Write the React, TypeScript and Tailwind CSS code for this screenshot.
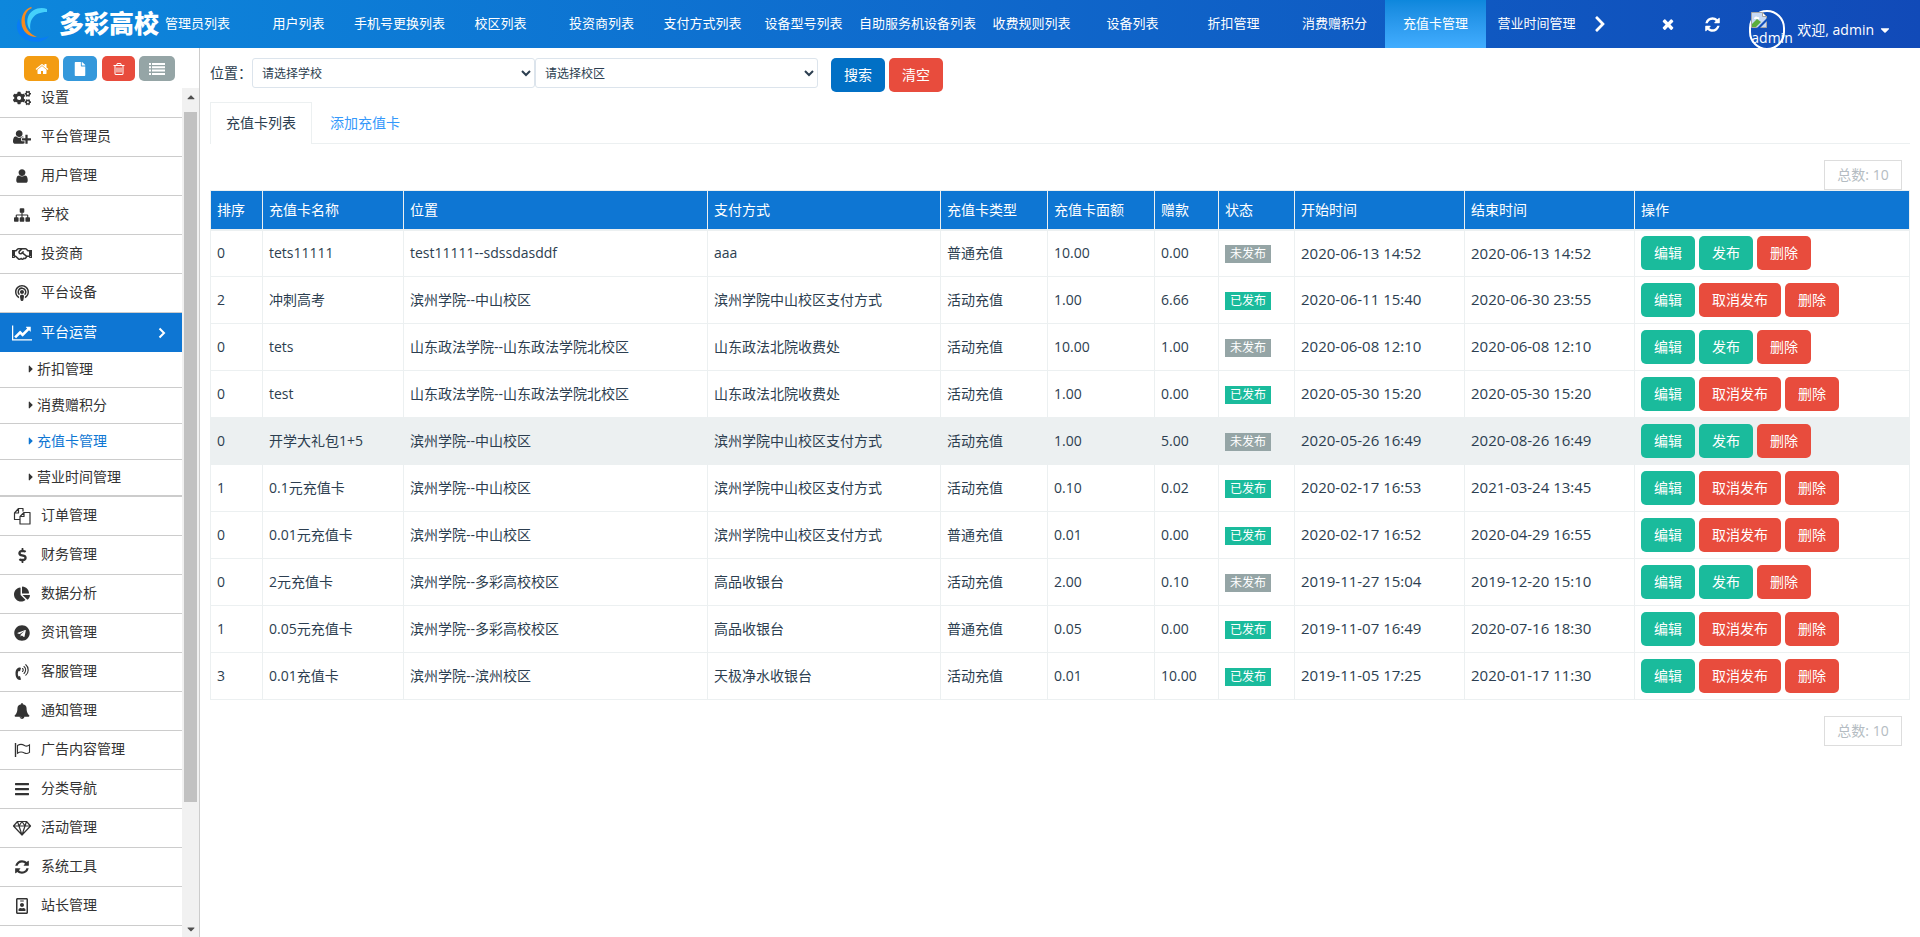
import { ReactNode, useState } from "react"
import clsx from "clsx"
import {
    FaBars,
    FaCaretDown,
    FaCaretRight,
    FaCaretUp,
    FaChartPie,
    FaChevronRight,
    FaCogs,
    FaDollarSign,
    FaFile,
    FaPodcast,
    FaRegHandshake,
    FaRegIdBadge,
    FaTelegram,
} from "react-icons/fa"

interface GlyphProps {
    d: string
    viewBox?: string
    className?: string
}

const Glyph = ({ d, viewBox = "0 0 1792 1792", className }: GlyphProps) => (
    <svg viewBox={viewBox} fill="currentColor" className={className} aria-hidden="true">
        <path d={d} />
    </svg>
)

const HOME = "M1472 992v480q0 26-19 45t-45 19h-384v-384h-256v384h-384q-26 0-45-19t-19-45v-480q0-1 .5-3t.5-3l575-474 575 474q1 2 1 6zm223-69l-62 74q-8 9-21 11h-3q-13 0-21-7l-692-577-692 577q-12 8-24 7-13-2-21-11l-62-74q-8-10-7-23.5t11-21.5l719-599q32-26 76-26t76 26l244 204v-195q0-14 9-23t23-9h192q14 0 23 9t9 23v408l219 182q10 8 11 21.5t-7 23.5z"
const TRASH = "M704 736v576q0 14-9 23t-23 9h-64q-14 0-23-9t-9-23v-576q0-14 9-23t23-9h64q14 0 23 9t9 23zm256 0v576q0 14-9 23t-23 9h-64q-14 0-23-9t-9-23v-576q0-14 9-23t23-9h64q14 0 23 9t9 23zm256 0v576q0 14-9 23t-23 9h-64q-14 0-23-9t-9-23v-576q0-14 9-23t23-9h64q14 0 23 9t9 23zm128 724v-948h-896v948q0 22 7 40.5t14.5 27 10.5 8.5h832q3 0 10.5-8.5t14.5-27 7-40.5zm-672-1076h448l-48-117q-7-9-17-11h-317q-10 2-17 11zm928 32v64q0 14-9 23t-23 9h-96v948q0 83-47 143.5t-113 60.5h-832q-66 0-113-58.5t-47-141.5v-952h-96q-14 0-23-9t-9-23v-64q0-14 9-23t23-9h309l70-167q15-37 54-63t79-26h320q40 0 79 26t54 63l70 167h309q14 0 23 9t9 23z"
const USER = "M1536 1399q0 109-62.5 187t-150.5 78h-854q-88 0-150.5-78t-62.5-187q0-85 8.5-160.5t31.5-152 58.5-131 94-89 134.5-34.5q131 128 313 128t313-128q76 0 134.5 34.5t94 89 58.5 131 31.5 152 8.5 160.5zm-256-887q0 159-112.5 271.5t-271.5 112.5-271.5-112.5-112.5-271.5 112.5-271.5 271.5-112.5 271.5 112.5 112.5 271.5z"
const USER_PLUS = "M704 896q-159 0-271.5-112.5t-112.5-271.5 112.5-271.5 271.5-112.5 271.5 112.5 112.5 271.5-112.5 271.5-271.5 112.5zm960 128h352q13 0 22.5 9.5t9.5 22.5v192q0 13-9.5 22.5t-22.5 9.5h-352v352q0 13-9.5 22.5t-22.5 9.5h-192q-13 0-22.5-9.5t-9.5-22.5v-352h-352q-13 0-22.5-9.5t-9.5-22.5v-192q0-13 9.5-22.5t22.5-9.5h352v-352q0-13 9.5-22.5t22.5-9.5h192q13 0 22.5 9.5t9.5 22.5v352zm-736 224q0 52 38 90t90 38h256v238q-68 50-171 50h-874q-121 0-194-69t-73-190q0-53 3.5-103.5t14-109 26.5-108.5 43-97.5 62-81 85.5-53.5 111.5-20q19 0 39 17 79 61 154.5 91.5t164.5 30.5 164.5-30.5 154.5-91.5q20-17 39-17 132 0 217 96h-223q-52 0-90 38t-38 90v192z"
const SITEMAP = "M1792 1248v320q0 40-28 68t-68 28h-320q-40 0-68-28t-28-68v-320q0-40 28-68t68-28h96v-192h-512v192h96q40 0 68 28t28 68v320q0 40-28 68t-68 28h-320q-40 0-68-28t-28-68v-320q0-40 28-68t68-28h96v-192h-512v192h96q40 0 68 28t28 68v320q0 40-28 68t-68 28h-320q-40 0-68-28t-28-68v-320q0-40 28-68t68-28h96v-192q0-52 38-90t90-38h512v-192h-96q-40 0-68-28t-28-68v-320q0-40 28-68t68-28h320q40 0 68 28t28 68v320q0 40-28 68t-68 28h-96v192h512q52 0 90 38t38 90v192h96q40 0 68 28t28 68z"
const LINE_CHART = "M2048 1536v128h-2048v-1536h128v1408h1920zm-128-1248v435q0 21-19.5 29.5t-35.5-7.5l-121-121-633 633q-10 10-23 10t-23-10l-233-233-416 416-192-192 585-585q10-10 23-10t23 10l233 233 464-464-121-121q-16-16-7.5-35.5t29.5-19.5h435q14 0 23 9t9 23z"
const BELL = "M912 1696q0-16-16-16-59 0-101.5-42.5t-42.5-101.5q0-16-16-16t-16 16q0 73 51.5 124.5t124.5 51.5q16 0 16-16zm816-288q0 52-38 90t-90 38h-448q0 106-75 181t-181 75-181-75-75-181h-448q-52 0-90-38t-38-90q50-42 91-88t85-119.5 74.5-158.5 50-206 19.5-260q0-152 117-282.5t307-158.5q-8-19-8-39 0-40 28-68t68-28 68 28 28 68q0 20-8 39 190 28 307 158.5t117 282.5q0 139 19.5 260t50 206 74.5 158.5 85 119.5 91 88z"
const REFRESH = "M1639 1056q0 5-1 7-64 268-268 434.5t-478 166.5q-146 0-282.5-55t-243.5-157l-129 129q-19 19-45 19t-45-19-19-45v-448q0-26 19-45t45-19h448q26 0 45 19t19 45-19 45l-137 137q71 66 161 102t187 36q134 0 250-65t186-179q11-17 53-117 8-23 30-23h192q13 0 22.5 9.5t9.5 22.5zm25-800v448q0 26-19 45t-45 19h-448q-26 0-45-19t-19-45 19-45l138-138q-148-137-349-137-134 0-250 65t-186 179q-11 17-53 117-8 23-30 23h-199q-13 0-22.5-9.5t-9.5-22.5v-7q65-268 270-434.5t480-166.5q146 0 284 55.5t245 156.5l130-129q19-19 45-19t45 19 19 45z"
const TIMES = "M1490 1322q0 40-28 68l-136 136q-28 28-68 28t-68-28l-294-294-294 294q-28 28-68 28t-68-28l-136-136q-28-28-28-68t28-68l294-294-294-294q-28-28-28-68t28-68l136-136q28-28 68-28t68 28l294 294 294-294q28-28 68-28t68 28l136 136q28 28 28 68t-28 68l-294 294 294 294q28 28 28 68z"

const FilesIcon = () => (
    <svg viewBox="0 0 18 18" fill="none" stroke="currentColor" strokeWidth="1.2" strokeLinejoin="round" className="size-[18px]">
        <path d="M7 12.5H1.500V6l4-4.500H10v3M5.500 1.500V6h-4" />
        <path d="M7 9.500l4-4h6v11.500H7zM11 5.500v4H7" />
    </svg>
)

const PhoneIcon = () => (
    <svg viewBox="0 0 16 18" fill="none" stroke="currentColor" className="h-[18px] w-4">
        <path d="M6 4.500C3 4.500 1.500 7 1.500 10.500S3 17 6 17l1-.5-1-3.500-1.500.4C3.600 11.500 3.600 10 4.500 8L6 8.300 7 5z" fill="currentColor" stroke="none" />
        <path d="M8.500 5.500c1 .8 1 2.200 0 3M10 3.500c2.200 1.600 2.200 5 0 7M11.800 1.700c3.200 2.600 3.200 7.800 0 10.500" strokeWidth="1.100" strokeLinecap="round" />
    </svg>
)

const FlagIcon = () => (
    <svg viewBox="0 0 18 18" fill="none" stroke="currentColor" strokeWidth="1.1" className="size-[18px]">
        <path d="M2.500 2v14" strokeWidth="1.400" />
        <path d="M4.500 4.500c3-2 5.500-1 7 0s3.500.6 5-.6v7.500c-1.500 1-3.500 1.400-5 .6s-4-1.800-7 .2z" />
    </svg>
)

const DiamondIcon = () => (
    <svg viewBox="0 0 20 18" fill="none" stroke="currentColor" strokeWidth="1.200" strokeLinejoin="round" className="h-[18px] w-5">
        <path d="M5.500 2.500h9L18.500 7 10 16 1.500 7zM1.500 7h17M5.500 2.500L7 7l3 9 3-9 1.500-4.500M7 7l3-4.500L13 7" />
    </svg>
)

const AngleIcon = () => (
    <svg viewBox="0 0 8 12" fill="none" stroke="currentColor" strokeWidth="2" className="h-3 w-2">
        <path d="M1.500 1.500L6 6l-4.500 4.500" />
    </svg>
)

const ListIcon = () => (
    <svg viewBox="0 0 16 12" fill="currentColor" className="h-3 w-4">
        <path d="M0 0h2v2H0zM3 0h13v2H3zM0 3.300h2v2H0zM3 3.300h13v2H3zM0 6.600h2v2H0zM3 6.600h13v2H3zM0 10h2v2H0zM3 10h13v2H3z" />
    </svg>
)

const Logo = () => (
    <svg viewBox="0 0 36 38" fill="none" className="h-[38px] w-9 shrink-0">
        <path d="M3 14C-2 22 2 33 14 36c8 2 15 0 19-5-7 3-14 3-20-1C7 27 4 21 3 14z" fill="#087cf5" />
        <path d="M15 2C9 4 5 10 5.500 18 6 26 12 32 21 32c-7-3-11.500-8-12-15C8 10 11 5 16 3z" fill="#f78b1f" />
        <path d="M31 4C24 1.500 15 4 12 12c-1.500 5-.5 10 2.500 13C13 16 17 7 31 7z" fill="#45d0fb" />
    </svg>
)

// Placeholder the browser shows when the avatar can't be loaded
const BrokenImage = () => (
    <svg viewBox="0 0 16 16" className="block size-4">
        <path d="M.5.5h11l4 4v11H.5z" fill="#c6d9f5" stroke="#a5a5a5" />
        <path d="M3 7c0-2 2-3 3-2 2-.5 3 1 2 2z" fill="#fff" />
        <path d="M1 15v-3l5-5 4 3-5 5z" fill="#5aad3c" />
        <path d="M16 6v3l-7 7H6z" fill="#1150bc" />
        <path d="M11.500.5v4h4z" fill="#fff" stroke="#a5a5a5" />
    </svg>
)

const topTabs = [
    "管理员列表", "用户列表", "手机号更换列表", "校区列表", "投资商列表", "支付方式列表", "设备型号列表",
    "自助服务机设备列表", "收费规则列表", "设备列表", "折扣管理", "消费赠积分", "充值卡管理", "营业时间管理",
]

interface MenuItem {
    label: string
    icon: ReactNode
    children?: string[]
}

const menu: MenuItem[] = [
    { label: "设置", icon: <FaCogs size={18} /> },
    { label: "平台管理员", icon: <Glyph d={USER_PLUS} viewBox="0 0 2048 1792" className="h-4 w-[18px]" /> },
    { label: "用户管理", icon: <Glyph d={USER} className="size-4" /> },
    { label: "学校", icon: <Glyph d={SITEMAP} className="size-4" /> },
    { label: "投资商", icon: <FaRegHandshake size={20} /> },
    { label: "平台设备", icon: <FaPodcast size={16} /> },
    {
        label: "平台运营",
        icon: <Glyph d={LINE_CHART} viewBox="0 0 2048 1792" className="h-[18px] w-5" />,
        children: ["折扣管理", "消费赠积分", "充值卡管理", "营业时间管理"],
    },
    { label: "订单管理", icon: <FilesIcon /> },
    { label: "财务管理", icon: <FaDollarSign size={15} /> },
    { label: "数据分析", icon: <FaChartPie size={16} /> },
    { label: "资讯管理", icon: <FaTelegram size={16} /> },
    { label: "客服管理", icon: <PhoneIcon /> },
    { label: "通知管理", icon: <Glyph d={BELL} className="size-4" /> },
    { label: "广告内容管理", icon: <FlagIcon /> },
    { label: "分类导航", icon: <FaBars size={16} /> },
    { label: "活动管理", icon: <DiamondIcon /> },
    { label: "系统工具", icon: <Glyph d={REFRESH} className="size-4" /> },
    { label: "站长管理", icon: <FaRegIdBadge size={16} /> },
]

interface RechargeCard {
    sort: number
    name: string
    place: string
    payment: string
    type: string
    amount: string
    bonus: string
    published: boolean
    start: string
    end: string
}

const cards: RechargeCard[] = [
    { sort: 0, name: "tets11111", place: "test11111--sdssdasddf", payment: "aaa", type: "普通充值", amount: "10.00", bonus: "0.00", published: false, start: "2020-06-13 14:52", end: "2020-06-13 14:52" },
    { sort: 2, name: "冲刺高考", place: "滨州学院--中山校区", payment: "滨州学院中山校区支付方式", type: "活动充值", amount: "1.00", bonus: "6.66", published: true, start: "2020-06-11 15:40", end: "2020-06-30 23:55" },
    { sort: 0, name: "tets", place: "山东政法学院--山东政法学院北校区", payment: "山东政法北院收费处", type: "活动充值", amount: "10.00", bonus: "1.00", published: false, start: "2020-06-08 12:10", end: "2020-06-08 12:10" },
    { sort: 0, name: "test", place: "山东政法学院--山东政法学院北校区", payment: "山东政法北院收费处", type: "活动充值", amount: "1.00", bonus: "0.00", published: true, start: "2020-05-30 15:20", end: "2020-05-30 15:20" },
    { sort: 0, name: "开学大礼包1+5", place: "滨州学院--中山校区", payment: "滨州学院中山校区支付方式", type: "活动充值", amount: "1.00", bonus: "5.00", published: false, start: "2020-05-26 16:49", end: "2020-08-26 16:49" },
    { sort: 1, name: "0.1元充值卡", place: "滨州学院--中山校区", payment: "滨州学院中山校区支付方式", type: "活动充值", amount: "0.10", bonus: "0.02", published: true, start: "2020-02-17 16:53", end: "2021-03-24 13:45" },
    { sort: 0, name: "0.01元充值卡", place: "滨州学院--中山校区", payment: "滨州学院中山校区支付方式", type: "普通充值", amount: "0.01", bonus: "0.00", published: true, start: "2020-02-17 16:52", end: "2020-04-29 16:55" },
    { sort: 0, name: "2元充值卡", place: "滨州学院--多彩高校校区", payment: "高品收银台", type: "活动充值", amount: "2.00", bonus: "0.10", published: false, start: "2019-11-27 15:04", end: "2019-12-20 15:10" },
    { sort: 1, name: "0.05元充值卡", place: "滨州学院--多彩高校校区", payment: "高品收银台", type: "普通充值", amount: "0.05", bonus: "0.00", published: true, start: "2019-11-07 16:49", end: "2020-07-16 18:30" },
    { sort: 3, name: "0.01充值卡", place: "滨州学院--滨州校区", payment: "天极净水收银台", type: "活动充值", amount: "0.01", bonus: "10.00", published: true, start: "2019-11-05 17:25", end: "2020-01-17 11:30" },
]

const columns = [
    { title: "排序", width: "w-[52px]" },
    { title: "充值卡名称", width: "w-[141px]" },
    { title: "位置", width: "w-[304px]" },
    { title: "支付方式", width: "w-[233px]" },
    { title: "充值卡类型", width: "w-[107px]" },
    { title: "充值卡面额", width: "w-[107px]" },
    { title: "赠款", width: "w-[64px]" },
    { title: "状态", width: "w-[76px]" },
    { title: "开始时间", width: "w-[170px]" },
    { title: "结束时间", width: "w-[170px]" },
    { title: "操作", width: "w-[275px]" },
]

const buttonColors = {
    blue: "bg-[#0170c5]",
    green: "bg-[#1abb9c]",
    red: "bg-[#e84c3d]",
}

const Button = ({ color, children }: { color: keyof typeof buttonColors; children: ReactNode }) => (
    <button type="button" className={clsx("h-[34px] shrink-0 rounded-[5px] px-[13px] text-sm text-white", buttonColors[color])}>
        {children}
    </button>
)

const Total = () => (
    <div className="flex justify-end pr-2">
        <span className="flex h-[30px] min-w-[78px] items-center justify-center border border-[#ddd] px-3 text-[#b4bcc2]">总数: {cards.length}</span>
    </div>
)

function Header() {
    return (
        <header className="flex h-12 items-center overflow-hidden bg-linear-to-r from-[#0d87dc] via-[#0f69cc] to-[#114ab8] text-white">
            <a href="#" className="flex w-[147px] shrink-0 items-center gap-[7px] pl-4">
                <Logo />
                <span className="text-[25px] font-black whitespace-nowrap">多彩高校</span>
            </a>
            <nav className="flex h-full shrink-0 text-[13px]">
                {topTabs.map((tab) => (
                    <a
                        key={tab}
                        href="#"
                        className={clsx(
                            "flex h-full min-w-[101px] items-center justify-center px-[5px] pb-px whitespace-nowrap",
                            tab === "充值卡管理" && "bg-linear-to-b from-[#0d87dc] to-[#41adff]"
                        )}
                    >
                        {tab}
                    </a>
                ))}
            </nav>
            <button type="button" aria-label="下一页" className="ml-1 shrink-0">
                <FaChevronRight size={18} />
            </button>
            <div className="ml-auto flex h-full shrink-0 items-center pr-7">
                <button type="button" aria-label="关闭" className="mr-7">
                    <Glyph d={TIMES} className="size-4" />
                </button>
                <button type="button" aria-label="刷新" className="mr-7">
                    <Glyph d={REFRESH} className="size-[17px]" />
                </button>
                <a href="#" className="flex h-full items-start gap-3 pt-[10px]">
                    <span className="block h-10 w-9 rounded-[18px] border-2 border-white text-sm leading-5">
                        <BrokenImage />
                        admin
                    </span>
                    <span className="flex items-center gap-1 pt-[10px] text-sm leading-5">
                        欢迎, admin
                        <FaCaretDown size={14} />
                    </span>
                </a>
            </div>
        </header>
    )
}

function Sidebar() {
    return (
        <aside className="flex w-[200px] shrink-0 flex-col border-r border-[#ccc] bg-white text-[#333]">
            <div className="flex h-10 shrink-0 gap-1 pt-2 pl-6 text-white">
                <button type="button" aria-label="首页" className="flex h-[25px] w-[35px] items-center justify-center rounded-[5px] bg-[#f39c12]">
                    <Glyph d={HOME} className="size-[14px]" />
                </button>
                <button type="button" aria-label="文件" className="flex h-[25px] w-[34px] items-center justify-center rounded-[5px] bg-[#3498db]">
                    <FaFile size={14} />
                </button>
                <button type="button" aria-label="删除" className="ml-px flex h-[25px] w-[33px] items-center justify-center rounded-[5px] bg-[#e84c3d]">
                    <Glyph d={TRASH} className="size-[14px]" />
                </button>
                <button type="button" aria-label="列表" className="flex h-[25px] w-[36px] items-center justify-center rounded-[5px] bg-[#95a5a6]">
                    <ListIcon />
                </button>
            </div>
            <div className="flex min-h-0 flex-1">
                <div className="flex min-w-0 flex-1 flex-col justify-start overflow-hidden">
                    <ul className="-mt-[9px]">
                        {menu.map((item) => (
                            <li key={item.label} className="border-b border-[#ccc]">
                                <a
                                    href="#"
                                    className={clsx("flex h-[38px] items-center pr-4 pl-3", item.children && "h-[39px] bg-[#0e76d3] text-white")}
                                >
                                    <span className="flex w-5 shrink-0 justify-center">{item.icon}</span>
                                    <span className="ml-[9px] flex-1 pb-[2px]">{item.label}</span>
                                    {item.children && <AngleIcon />}
                                </a>
                                {item.children && (
                                    <ul>
                                        {item.children.map((child) => (
                                            <li key={child} className="border-b border-[#ccc]">
                                                <a
                                                    href="#"
                                                    className={clsx("flex h-[35px] items-center pb-[2px] pl-[25px]", child === "充值卡管理" && "text-[#0e76d3]")}
                                                >
                                                    <FaCaretRight size={12} />
                                                    {child}
                                                </a>
                                            </li>
                                        ))}
                                    </ul>
                                )}
                            </li>
                        ))}
                    </ul>
                </div>
                {/* Scrollbar */}
                <div className="flex w-[17px] shrink-0 flex-col items-center bg-[#f1f1f1] text-[#505050]">
                    <div className="flex h-6 items-start pt-[3px]">
                        <FaCaretUp size={12} />
                    </div>
                    <div className="w-[13px] grow-[690] bg-[#c1c1c1]" />
                    <div className="grow-[118]" />
                    <div className="flex h-[17px] items-center">
                        <FaCaretDown size={12} />
                    </div>
                </div>
            </div>
        </aside>
    )
}

function CardTable() {
    return (
        <table className="w-full table-fixed border-collapse text-left">
            <thead>
                <tr className="h-[39px] border-b-2 border-[#ecf0f1] bg-[#0e76d3] text-white">
                    {columns.map((column) => (
                        <th key={column.title} scope="col" className={clsx("border-x border-t border-[#ecf0f1] px-[6px] font-normal", column.width)}>
                            {column.title}
                        </th>
                    ))}
                </tr>
            </thead>
            <tbody>
                {cards.map((card, index) => (
                    <tr
                        key={index}
                        className={clsx("h-[47px] [&>td]:border [&>td]:border-[#ecf0f1] [&>td]:px-[6px]", card.name === "开学大礼包1+5" && "bg-[#ecf0f1]")}
                    >
                        <td>{card.sort}</td>
                        <td>{card.name}</td>
                        <td>{card.place}</td>
                        <td>{card.payment}</td>
                        <td>{card.type}</td>
                        <td>{card.amount}</td>
                        <td>{card.bonus}</td>
                        <td>
                            <span className={clsx("inline-block h-[18px] px-[5px] align-middle text-xs leading-[18px] text-white", card.published ? "bg-[#1abb9c]" : "bg-[#95a5a6]")}>
                                {card.published ? "已发布" : "未发布"}
                            </span>
                        </td>
                        <td className="text-[15px]">{card.start}</td>
                        <td className="text-[15px]">{card.end}</td>
                        <td>
                            <div className="flex gap-1">
                                <Button color="green">编辑</Button>
                                {card.published ? <Button color="red">取消发布</Button> : <Button color="green">发布</Button>}
                                <Button color="red">删除</Button>
                            </div>
                        </td>
                    </tr>
                ))}
            </tbody>
        </table>
    )
}

export default function App() {
    const [school, setSchool] = useState("")
    const [campus, setCampus] = useState("")
    const selectClass = "h-[30px] w-[283px] rounded-[3px] border border-[#dce4ec] bg-white px-[5px] text-xs text-[#2c3e50]"

    return (
        <div className="flex h-screen flex-col overflow-hidden bg-white font-['Open_Sans','Noto_Sans_CJK_SC',sans-serif] text-sm text-[#2c3e50]">
            <Header />
            <div className="flex min-h-0 flex-1">
                <Sidebar />
                <main className="min-w-0 flex-1 overflow-hidden px-[10px] pt-[10px]">
                    <form className="flex" onSubmit={(e) => e.preventDefault()}>
                        <label htmlFor="school" className="w-[42px] leading-[30px] whitespace-nowrap">位置：</label>
                        <select id="school" value={school} onChange={(e) => setSchool(e.target.value)} className={selectClass}>
                            <option value="">请选择学校</option>
                        </select>
                        <select aria-label="校区" value={campus} onChange={(e) => setCampus(e.target.value)} className={selectClass}>
                            <option value="">请选择校区</option>
                        </select>
                        <div className="ml-[13px] flex gap-1">
                            <Button color="blue">搜索</Button>
                            <Button color="red">清空</Button>
                        </div>
                    </form>

                    <div className="mt-[10px] flex border-b border-[#ecf0f1]">
                        <a href="#" className="-mb-px flex h-[42px] items-center border border-b-0 border-[#ecf0f1] bg-white px-[15px] pb-[2px]">充值卡列表</a>
                        <a href="#" className="flex h-[41px] items-center px-[18px] text-[#3498fb]">添加充值卡</a>
                    </div>

                    <div className="mt-4">
                        <Total />
                        <CardTable />
                    </div>
                    <div className="mt-4">
                        <Total />
                    </div>
                </main>
            </div>
        </div>
    )
}
